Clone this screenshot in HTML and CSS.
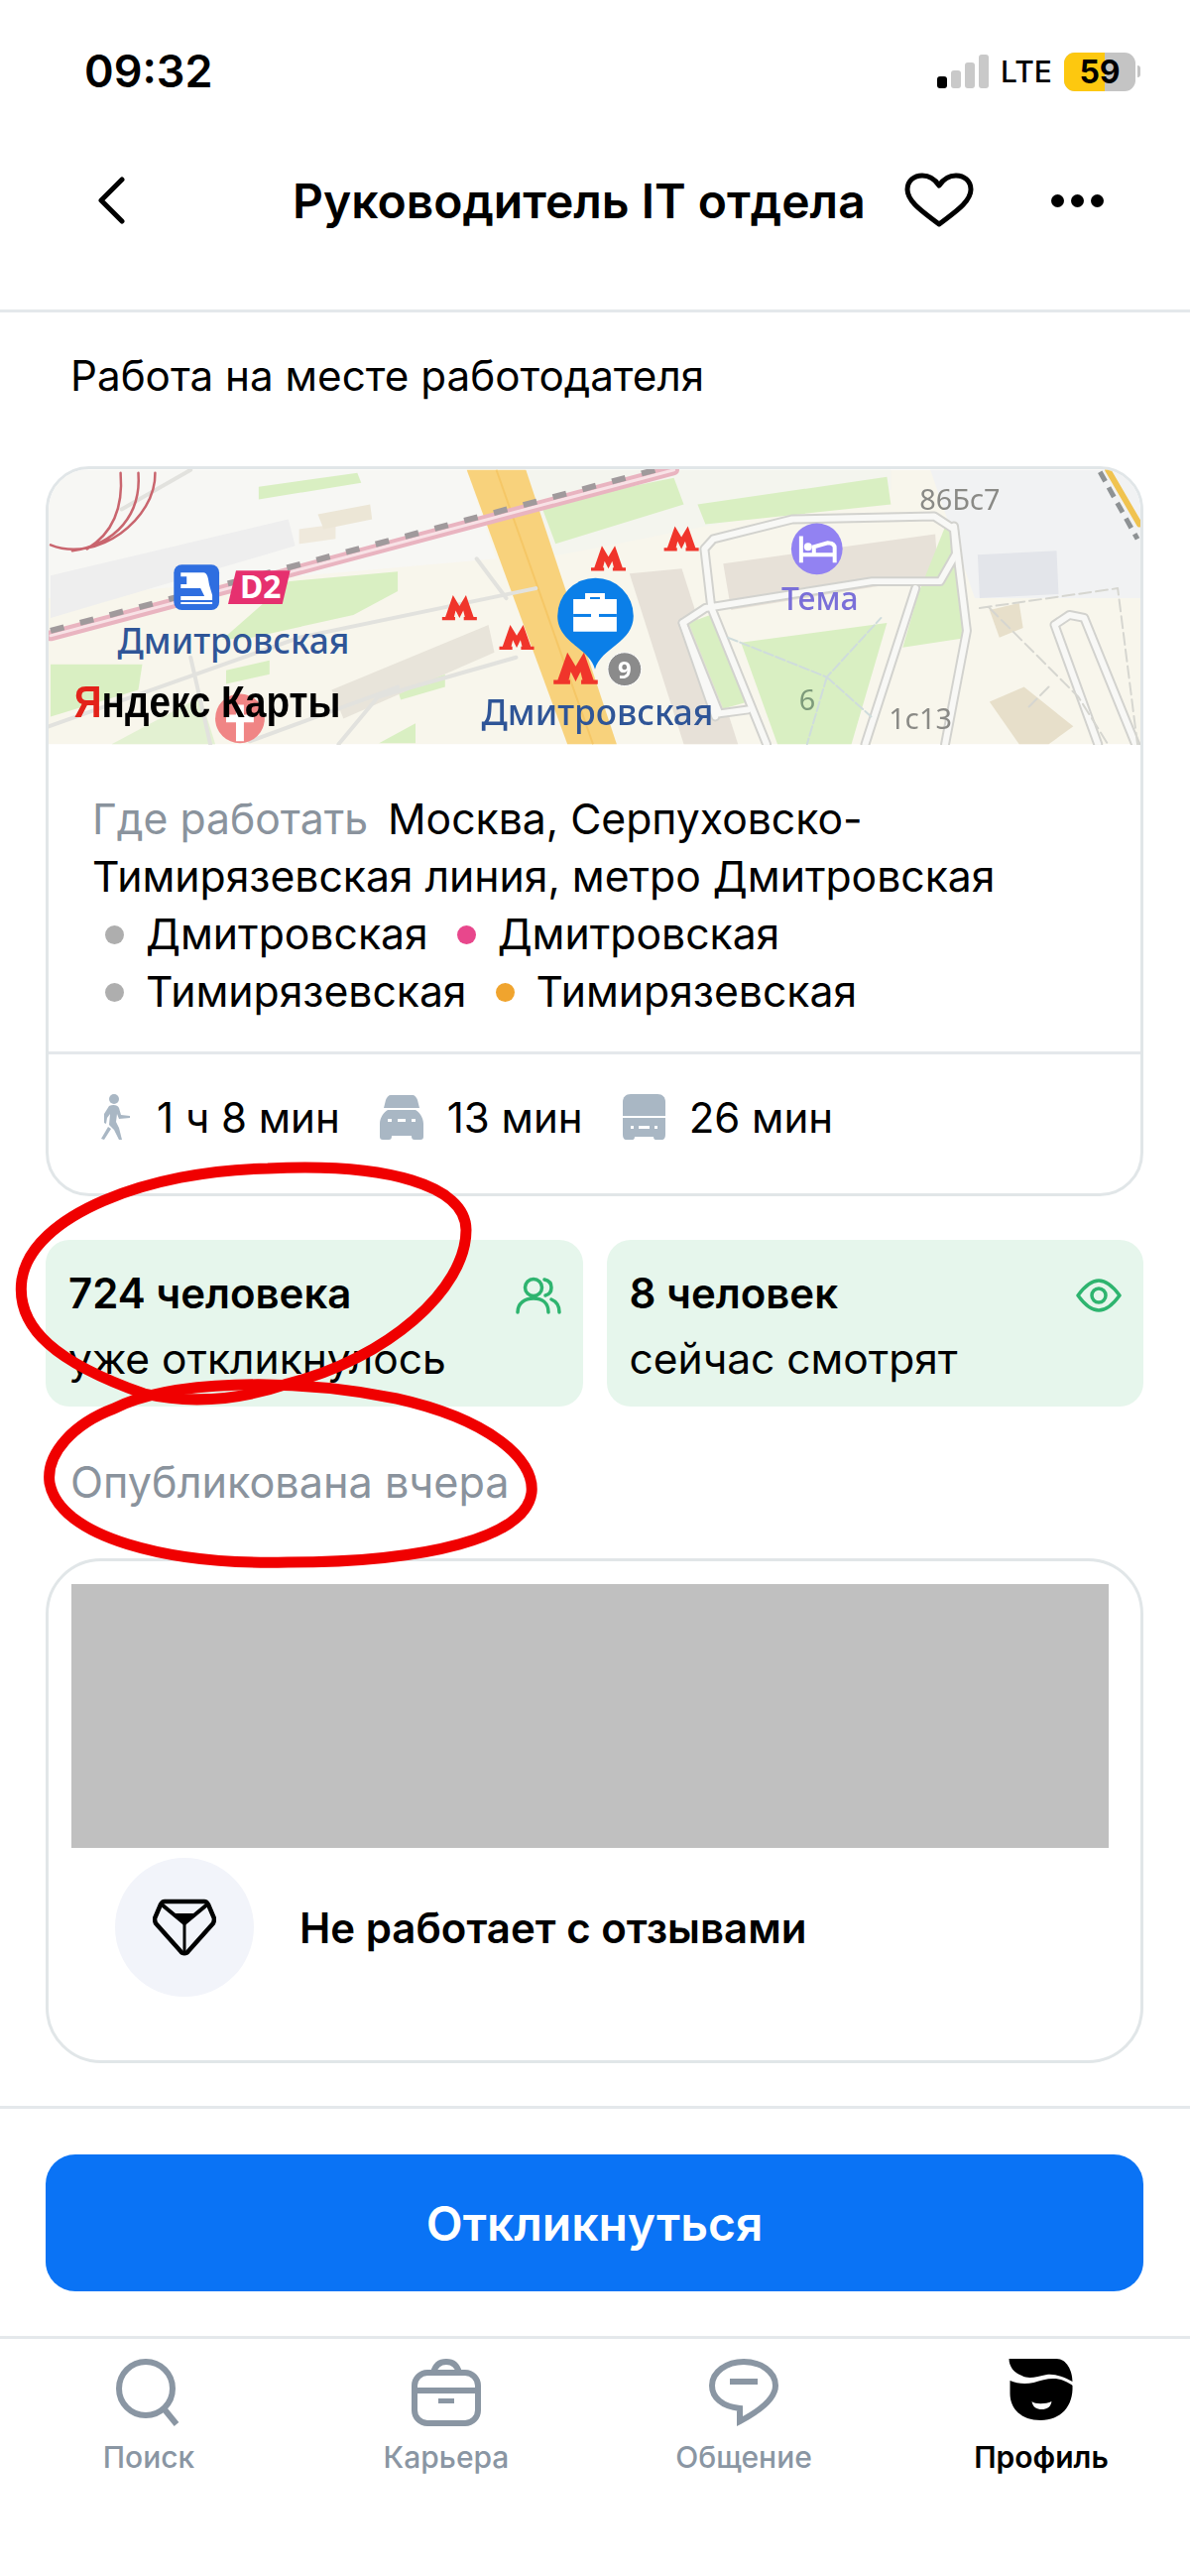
FILE: index.html
```html
<!DOCTYPE html>
<html lang="ru">
<head>
    <meta charset="UTF-8">
    <meta name="viewport" content="width=device-width, initial-scale=1.0">
    <title>Руководитель IT отдела</title>
    <link rel="stylesheet" href="styles.css">
</head>
<body>
<div class="page">
    <!-- Status bar -->
    <div class="statusbar">
        <span class="time">09:32</span>
        <div class="status-right">
            <div class="signal"><i class="on"></i><i></i><i></i><i></i></div>
            <span class="lte">LTE</span>
            <div class="battery"><span class="battery-fill"></span><span class="battery-num">59</span></div>
            <span class="battery-nub"></span>
        </div>
    </div>

    <!-- Top bar -->
    <div class="navbar">
        <svg class="nav-back" viewBox="0 0 30 48"><path d="M26 3 L5 24 L26 45" fill="none" stroke="#000" stroke-width="5" stroke-linecap="round" stroke-linejoin="round"/></svg>
        <h1 class="nav-title">Руководитель IT отдела</h1>
        <svg class="nav-heart" viewBox="0 0 72 56"><path d="M36 52 C22 41 4 30 4 17 C4 8 11 3 19 3 C26 3 32 7 36 13 C40 7 46 3 53 3 C61 3 68 8 68 17 C68 30 50 41 36 52 Z" fill="none" stroke="#000" stroke-width="5" stroke-linejoin="round"/></svg>
        <div class="nav-dots"><i></i><i></i><i></i></div>
    </div>

    <div class="content">
        <p class="work-type">Работа на месте работодателя</p>

        <!-- Map and address -->
        <div class="card">
            <svg class="map" viewBox="46 470 1107 278">
                <defs>
                    <g id="metro"><path d="M0 20 L3 20 L10 0 L16 10 L22 0 L29 20 L32 20 L32 23 L20 23 L20 20 L21 20 L19.500 14 L16 21 L12.500 14 L11 20 L12 20 L12 23 L0 23 Z" fill="#f0352b"/></g>
                </defs>
                <rect x="46" y="470" width="1107" height="278" fill="#f8f6ec"/>
                <path d="M46 470 L470 470 L500 560 L46 600 Z" fill="#f7f7f4"/>
                <path d="M48 577 L289 520 L296 547 L48 620 Z" fill="#eeeeee"/>
                <path d="M300 530 L337 525 L337 540 L300 545 Z" fill="#efe9dc"/>
                <path d="M319 515 L372 505 L374 520 L325 530 Z" fill="#ece6d6"/>
                <path d="M259 487 L359 473 L363 483 L259 500 Z" fill="#d9efc2"/>
                <path d="M222 642 L289 583 L400 573 L400 593 L355 617 L252 640 Z" fill="#d9efc2"/>
                <path d="M48 667 L141 667 L137 693 L48 720 Z" fill="#d9efc2"/>
                <path d="M226 673 L270 663 L270 677 L226 687 Z" fill="#d9efc2"/>
                <path d="M400 693 L448 677 L448 690 L403 703 Z" fill="#d9efc2"/>
                <path d="M381 747 L418 727 L418 747 Z" fill="#d9efc2"/>
                <path d="M110 748 L200 700 L215 748 Z" fill="#e3f1d2"/>
                <path d="M530 470 L900 470 L900 490 L545 560 Z" fill="#f4f5ee"/>
                <path d="M704 505 L896 477 L900 505 L712 525 Z" fill="#d9efc2"/>
                <path d="M545 505 L680 478 L690 505 L560 545 Z" fill="#d9efc2"/>
                <path d="M940 470 L1153 470 L1153 600 L985 600 Z" fill="#f1f2f3"/>
                <path d="M988 556 L1068 552 L1070 596 L990 600 Z" fill="#e3e5ea"/>
                <path d="M730 565 L945 535 L948 578 L738 612 Z" fill="#e7e1d8"/>
                <path d="M635 575 L688 570 L745 748 L690 748 Z" fill="#e7e1d8"/>
                <path d="M333 693 L492 627 L498 655 L345 722 Z" fill="#e8e4da"/>
                <path d="M748 645 L896 625 L860 748 L785 748 Z" fill="#d9efc2"/>
                <path d="M928 595 L958 520 L978 640 L912 650 Z" fill="#d9efc2"/>
                <path d="M695 625 L722 615 L755 705 L730 712 Z" fill="#d9efc2"/>
                <path d="M1000 612 L1030 605 L1034 630 L1010 640 Z" fill="#e7dfca"/>
                <path d="M1000 705 L1035 690 L1085 730 L1060 748 L1030 748 Z" fill="#e7dfca"/>
                <path d="M470 470 L530 470 L622 748 L572 748 Z" fill="#f8d27c"/>
                <path d="M500 470 L598 748" stroke="#f5c766" stroke-width="2" fill="none"/>

                <g fill="none" stroke-linecap="round" stroke-linejoin="round">
                    <path d="M722 720 L689 625 L712 610 L881 583 L950 583 L966 555 L964 530 L944 517 L800 520 L720 540 L711 550 L718 610 L774 748" stroke="#d2d2ce" stroke-width="10"/>
                    <path d="M755 713 L726 717 L689 625" stroke="#d2d2ce" stroke-width="10"/>
                    <path d="M964 527 L977 633 L955 748 M925 590 L874 748 M1066 627 L1110 748 M1066 627 L1081 617 L1096 620 L1148 748" stroke="#d2d2ce" stroke-width="10"/>
                    <path d="M722 720 L689 625 L712 610 L881 583 L950 583 L966 555 L964 530 L944 517 L800 520 L720 540 L711 550 L718 610 L774 748" stroke="#f8f8f6" stroke-width="6"/>
                    <path d="M755 713 L726 717 L689 625" stroke="#f8f8f6" stroke-width="6"/>
                    <path d="M964 527 L977 633 L955 748 M925 590 L874 748 M1066 627 L1110 748 M1066 627 L1081 617 L1096 620 L1148 748" stroke="#f8f8f6" stroke-width="6"/>
                    <path d="M46 730 L300 640 L540 590 M340 748 L380 700 L520 660 M210 748 L190 660 M120 510 L190 470 M480 560 L510 600 M250 745 L400 690" stroke="#e2e2de" stroke-width="4"/>
                    <path d="M735 640 L835 680 L890 620 M835 680 L815 748 M835 680 L880 720" stroke="#cfdcdc" stroke-width="2" stroke-dasharray="10 3"/>
                    <path d="M990 610 L1130 590 L1150 748 M1000 610 L1090 700 L1120 748 M1060 690 L1040 710" stroke="#d6d6d0" stroke-width="2" stroke-dasharray="12 5"/>
                    <path d="M48 638 L680 470" stroke="#e9b4c0" stroke-width="11"/>
                    <path d="M48 638 L680 470" stroke="#f8e2e6" stroke-width="3"/>
                    <path d="M48 633 L680 465" stroke="#a09a9c" stroke-width="6" stroke-dasharray="14 17" stroke-linecap="butt"/>
                    <path d="M1112 472 L1150 540" stroke="#8e9294" stroke-width="5" stroke-dasharray="11 7" stroke-linecap="butt"/>
                    <path d="M1120 470 L1152 525" stroke="#f0c350" stroke-width="6"/>
                    <path d="M119 473 C122 510 110 535 85 550 M137 473 C140 515 115 545 70 552 M154 473 C155 520 95 565 48 546" stroke="#c9656e" stroke-width="2.500"/>
                </g>

                <!-- hospital -->
                <circle cx="240" cy="722" r="25" fill="#f08585"/>
                <path d="M236 708 H244 V718 H254 V726 H244 V745 H236 V726 H226 V718 H236 Z" fill="#fff"/>

                <!-- train station -->
                <rect x="173" y="566" width="46" height="46" rx="8" fill="#2f6ee0"/>
                <path d="M180 574 H203 C207 574 208 580 209 587 L212 597 V602 H180 V598 H204 L200 590 H180 V586 H186 V578 H180 Z" fill="#fff"/>
                <rect x="180" y="604" width="32" height="2" fill="#fff"/>
                <path d="M236 572 H291 L283 606 H228 Z" fill="#e6306f"/>
                <text class="map-tag" x="240" y="600">D2</text>
                <text class="map-station" x="116" y="656">Дмитровская</text>

                <use href="#metro" transform="translate(445 597) scale(1.100)"/>
                <use href="#metro" transform="translate(503 627) scale(1.100)"/>
                <use href="#metro" transform="translate(596 547) scale(1.100)"/>
                <use href="#metro" transform="translate(670 527) scale(1.100)"/>
                <use href="#metro" transform="translate(558 655) scale(1.400)"/>

                <!-- vacancy pin -->
                <path d="M600 672 C594 650 562 645 562 618 A38.500 38.500 0 0 1 639 618 C639 645 606 650 600 672 Z" fill="#0b7fe8"/>
                <path d="M590 601 V595 H610 V601 H622 V634 H578 V601 Z M595 601 H605 V599 H595 Z" fill="#fff" fill-rule="evenodd"/>
                <rect x="578" y="616" width="44" height="3" fill="#0b7fe8"/>
                <rect x="596" y="613" width="8" height="8" fill="#fff"/>
                <circle cx="630" cy="672" r="17" fill="#8b8b8b" stroke="#fff" stroke-width="1"/>
                <text class="map-nine" x="630" y="681">9</text>

                <!-- hotel -->
                <circle cx="825" cy="550" r="26" fill="#9282f2"/>
                <path d="M809 537 V564 M809 556 H843 V564 M843 556 V549 C843 545 840 544 836 544 L822 548 V556" fill="none" stroke="#fff" stroke-width="4"/>
                <circle cx="816" cy="548" r="4" fill="#fff"/>

                <text class="map-station" x="485" y="729">Дмитровская</text>
                <text class="map-poi" x="789" y="612">Тема</text>
                <text class="map-house" x="929" y="510">86Бс7</text>
                <text class="map-house map-house-green" x="807" y="714">6</text>
                <text class="map-house" x="898" y="733">1с13</text>
                <text class="map-logo" x="72" y="721" textLength="270" lengthAdjust="spacingAndGlyphs"><tspan class="map-logo-y">Я</tspan>ндекс Карты</text>
            </svg>

            <div class="address">
                <div class="address-line"><span class="muted where">Где работать</span>Москва, Серпуховско-</div>
                <div class="address-line">Тимирязевская линия, метро Дмитровская</div>
                <div class="stations">
                    <span class="station"><i class="dot dot-gray"></i>Дмитровская</span>
                    <span class="station"><i class="dot dot-pink"></i>Дмитровская</span>
                </div>
                <div class="stations">
                    <span class="station"><i class="dot dot-gray"></i>Тимирязевская</span>
                    <span class="station"><i class="dot dot-orange"></i>Тимирязевская</span>
                </div>
            </div>

            <div class="commute">
                <span class="commute-item">
                    <svg class="commute-icon" viewBox="0 0 34 46" fill="#a9b7c4"><circle cx="15" cy="5" r="5"/><path d="M10 12 C14 10 19 11 20 14 L22 21 L31 22 L31 24 L20 25 L18 20 L17 28 L20 34 L23 46 L20 46 L15 36 L10 31 L11 20 L8 24 L7 30 L5 29 L5 20 Z"/><path d="M9 33 L12 35 L5 46 L2 45 Z"/></svg>
                    1 ч 8 мин
                </span>
                <span class="commute-item">
                    <svg class="commute-icon" viewBox="0 0 44 46" fill="#a9b7c4"><path d="M11 1 H33 C35 1 37 3 38 6 L40 14 H4 L6 6 C7 3 9 1 11 1 Z"/><path d="M8 16 H36 C40 18 44 24 44 30 V43 C44 45 43 46 41 46 H35 C33 46 32 45 32 42 H12 C12 45 11 46 9 46 H3 C1 46 0 45 0 43 V30 C0 24 4 18 8 16 Z"/><path d="M8 25 h4 v3 h-4 Z M18 25 h8 v3 h-8 Z M32 25 h4 v3 h-4 Z" fill="#fff"/></svg>
                    13 мин
                </span>
                <span class="commute-item">
                    <svg class="commute-icon" viewBox="0 0 43 46" fill="#a9b7c4"><path d="M8 0 H35 C40 0 43 3 43 8 V22 H0 V8 C0 3 3 0 8 0 Z"/><path d="M0 24 H43 V40 C43 44 42 46 39 46 H33 C32 46 31 45 31 43 H12 C12 45 11 46 10 46 H4 C1 46 0 44 0 40 Z"/><path d="M8 32 h3 v3 h-3 Z M16 32 h11 v3 h-11 Z M32 32 h3 v3 h-3 Z" fill="#fff"/></svg>
                    26 мин
                </span>
            </div>
        </div>

        <!-- Counters -->
        <div class="stats">
            <div class="stat">
                <div class="stat-text"><b>724 человека</b><span>уже откликнулось</span></div>
                <svg class="stat-icon" viewBox="0 0 46 38" fill="none" stroke="#2eb46f" stroke-width="3.500" stroke-linecap="round"><circle cx="18" cy="11" r="8.500"/><path d="M2 36 C2 27 9 22 18 22 C27 22 33 27 33 36"/><path d="M29 3 C34 4 36 7 36 11 C36 15 34 18 30 19"/><path d="M36 23 C41 25 44 30 44 36"/></svg>
            </div>
            <div class="stat">
                <div class="stat-text"><b>8 человек</b><span>сейчас смотрят</span></div>
                <svg class="stat-icon" viewBox="0 0 46 34" fill="none" stroke="#2eb46f" stroke-width="3.500"><path d="M2 17 C10 6 16 2 23 2 C30 2 36 6 44 17 C36 28 30 32 23 32 C16 32 10 28 2 17 Z" stroke-linejoin="round"/><circle cx="23" cy="17" r="7"/></svg>
            </div>
        </div>

        <p class="published">Опубликована вчера</p>

        <!-- Reviews -->
        <div class="card review-card">
            <div class="redacted"></div>
            <div class="review">
                <div class="review-badge">
                    <svg class="review-icon" viewBox="0 0 64 58" fill="none" stroke="#000" stroke-width="4.500" stroke-linejoin="round"><path d="M12 3 H52 C54 3 55 4 56 6 L62 20 C62 22 62 23 61 25 L36 53 C34 56 30 56 28 53 L3 25 C2 23 2 22 2 20 L8 6 C9 4 10 3 12 3 Z"/><path d="M9 6 L32 25 L55 6" stroke-width="4"/><path d="M32 24 V54" stroke-width="3"/><path d="M18 15 H46 L32 27 Z" fill="#000" stroke="none"/></svg>
                </div>
                <span class="review-text">Не работает с отзывами</span>
            </div>
        </div>
    </div>

    <!-- Apply -->
    <div class="apply">
        <button class="apply-btn">Откликнуться</button>
    </div>

    <!-- Bottom tabs -->
    <div class="tabbar">
        <div class="tab">
            <svg class="tab-icon" viewBox="0 0 70 68" fill="none" stroke="#8a96a3" stroke-width="6"><circle cx="32" cy="30" r="27"/><path d="M50 50 L63 66" stroke-linecap="butt"/></svg>
            <span>Поиск</span>
        </div>
        <div class="tab">
            <svg class="tab-icon" viewBox="0 0 70 68" fill="none" stroke="#8a96a3" stroke-width="6"><rect x="3" y="14" width="64" height="51" rx="13"/><path d="M3 32 H67"/><path d="M22 14 C24 6 29 3 35 3 C41 3 46 6 48 14"/><rect x="27" y="40" width="16" height="5" fill="#8a96a3" stroke="none"/></svg>
            <span>Карьера</span>
        </div>
        <div class="tab">
            <svg class="tab-icon" viewBox="0 0 70 68" fill="none" stroke="#8a96a3" stroke-width="6"><path d="M35 3 C52 3 67 13 67 27 C67 40 52 52 31 63 L31 50 C13 48 3 39 3 27 C3 13 18 3 35 3 Z" stroke-linejoin="miter"/><rect x="21" y="20" width="28" height="6" fill="#8a96a3" stroke="none"/></svg>
            <span>Общение</span>
        </div>
        <div class="tab tab-active">
            <svg class="tab-icon" viewBox="-2.500 0 70 68" fill="#000"><path d="M0 0 H48 C58 0 64 12 64 23 C55 18 46 15 38 16 C28 18 20 21 13 17 C5 14 0 8 0 0 Z"/><path d="M1 22 C8 25 16 26 25 24 C35 21 45 18 55 22 C60 24 63 26 64 27 C65 48 52 62 32 62 C12 62 1 50 1 35 Z"/><path d="M23 43 C26 46 37 46 43 43 C42 49 38 51 33 51 C28 51 24 49 23 43 Z" fill="#fff"/></svg>
            <span>Профиль</span>
        </div>
    </div>

    <!-- Red marker drawn over the screenshot -->
    <svg class="marker" viewBox="0 0 1200 2597" fill="none" stroke="#f00000" stroke-width="11">
        <path d="M145 1405 C60 1375 15 1340 22 1290 C32 1225 150 1180 270 1178 C390 1172 470 1195 470 1240 C470 1300 390 1370 290 1395 C240 1412 190 1415 145 1405 Z"/>
        <path d="M115 1420 C170 1392 290 1388 400 1410 C490 1430 540 1470 536 1505 C530 1550 430 1575 290 1575 C170 1578 60 1550 50 1495 C46 1465 75 1435 115 1420 Z"/>
    </svg>
</div>
</body>
</html>
```

FILE: styles.css
```css
* {
    box-sizing: border-box;
}
body {
    margin: 0;
    background: #fff;
    color: #000;
    font-family: Inter, "Liberation Sans", sans-serif;
}
p, h1 {
    margin: 0;
}
.page {
    position: relative;
    width: 1200px;
    height: 2597px;
    overflow: hidden;
}

/* status bar */
.statusbar {
    height: 144px;
    padding: 46px 50px 0 85px;
    display: flex;
    justify-content: space-between;
    align-items: flex-start;
}
.time {
    font-size: 45px;
    line-height: 52px;
    font-weight: 600;
}
.status-right {
    display: flex;
    align-items: center;
    height: 52px;
}
.signal {
    display: flex;
    align-items: flex-end;
    gap: 4px;
    height: 34px;
    margin-right: 12px;
}
.signal i {
    width: 10px;
    background: #c9c9c9;
    border-radius: 3px;
    height: 34px;
}
.signal i:nth-child(1) {
    height: 12px;
    background: #000;
}
.signal i:nth-child(2) {
    height: 18px;
}
.signal i:nth-child(3) {
    height: 26px;
}
.lte {
    font-size: 30px;
    font-weight: 500;
    margin-right: 10px;
    width: 54px;
}
.battery {
    position: relative;
    width: 72px;
    height: 39px;
    border-radius: 11px;
    background: #c4c4c4;
    overflow: hidden;
    text-align: center;
}
.battery-fill {
    position: absolute;
    left: 0;
    top: 0;
    bottom: 0;
    width: 41px;
    background: #fdc80f;
}
.battery-num {
    position: relative;
    font-size: 32px;
    line-height: 39px;
    font-weight: 700;
}
.battery-nub {
    width: 3px;
    height: 12px;
    margin-left: 2px;
    background: #c4c4c4;
    border-radius: 0 3px 3px 0;
}

/* top bar */
.navbar {
    position: relative;
    height: 171px;
    border-bottom: 3px solid #e4e8eb;
    padding-bottom: 52px;
    display: flex;
    align-items: center;
}
.nav-back {
    width: 30px;
    height: 48px;
    margin-left: 97px;
}
.nav-title {
    margin-left: 168px;
    font-size: 48px;
    font-weight: 600;
    white-space: nowrap;
}
.nav-heart {
    width: 72px;
    height: 56px;
    margin-left: 38px;
}
.nav-dots {
    display: flex;
    gap: 7px;
    margin-left: 77px;
}
.nav-dots i {
    width: 13px;
    height: 13px;
    border-radius: 50%;
    background: #000;
}

/* content */
.content {
    padding: 0 47px 0 46px;
}
.work-type {
    font-size: 42.200px;
    line-height: 52px;
    margin: 38px 0 0 25px;
}
.card {
    margin-top: 65px;
    border: 3px solid #e1e6e8;
    border-radius: 44px;
    overflow: hidden;
}
.map {
    display: block;
    width: 100%;
    height: 278px;
    filter: blur(0.6px);
}
.map text {
    font-family: "Noto Sans", "Liberation Sans", sans-serif;
}
.map-tag {
    font-size: 32px;
    font-weight: 700;
    fill: #fff;
}
.map-station {
    font-size: 35.500px;
    font-weight: 500;
    fill: #2f5597;
}
.map-nine {
    font-size: 24px;
    font-weight: 700;
    fill: #fff;
    text-anchor: middle;
}
.map-poi {
    font-size: 32px;
    font-weight: 500;
    fill: #7a6fd8;
}
.map-house {
    font-size: 29px;
    fill: #8a8a86;
}
.map-house-green {
    fill: #7d9a7b;
}
.map .map-logo {
    font-family: "Liberation Sans", sans-serif;
    font-size: 44px;
    font-weight: 700;
    fill: #000;
}
.map-logo-y {
    fill: #e3231a;
}
.address {
    padding: 46px 24px 0 44px;
    height: 312px;
    border-bottom: 3px solid #e4e8eb;
    font-size: 42.700px;
    line-height: 58px;
}
.muted {
    color: #8a939d;
}
.where {
    margin-right: 20px;
}
.stations {
    display: flex;
    gap: 29px;
    padding-left: 13px;
}
.station {
    display: flex;
    align-items: center;
}
.dot {
    width: 19px;
    height: 19px;
    border-radius: 50%;
    margin-right: 22px;
}
.dot-gray {
    background: #aeaeae;
}
.dot-pink {
    background: #e8478c;
}
.dot-orange {
    background: #f0a42e;
}
.commute {
    height: 140px;
    padding: 0 24px 14px 51px;
    display: flex;
    align-items: center;
    gap: 40px;
    font-size: 42px;
}
.commute-item {
    display: flex;
    align-items: center;
    gap: 24px;
}
.commute-icon {
    height: 46px;
    width: auto;
}

/* counters */
.stats {
    display: flex;
    gap: 24px;
    margin-top: 44px;
}
.stat {
    flex: 1;
    height: 168px;
    background: #e6f6ec;
    border-radius: 24px;
    padding: 21px 22px 21px 23px;
    display: flex;
    justify-content: space-between;
}
.stat-text {
    display: flex;
    flex-direction: column;
    font-size: 42.500px;
    line-height: 66px;
    white-space: nowrap;
}
.stat-text b {
    font-size: 42px;
    font-weight: 600;
}
.stat-icon {
    width: 46px;
    height: 40px;
    margin-top: 15px;
}
.published {
    color: #8a939d;
    font-size: 43.200px;
    line-height: 52px;
    margin: 50px 0 0 25px;
}

/* reviews */
.review-card {
    margin-top: 51px;
    height: 509px;
    border-radius: 56px;
    padding: 23px 32px 23px 23px;
}
.redacted {
    height: 266px;
    background: #c0c0c0;
}
.review {
    display: flex;
    align-items: center;
    padding: 10px 0 0 44px;
}
.review-badge {
    width: 140px;
    height: 140px;
    border-radius: 50%;
    background: #f2f4fa;
    display: flex;
    align-items: center;
    justify-content: center;
}
.review-icon {
    width: 64px;
    height: 58px;
}
.review-text {
    margin-left: 46px;
    font-size: 42px;
    font-weight: 600;
}

/* apply */
.apply {
    position: absolute;
    left: 0;
    right: 0;
    top: 2123px;
    height: 235px;
    padding: 46px 47px 0 46px;
    border-top: 3px solid #e4e8eb;
    border-bottom: 3px solid #e4e8eb;
}
.apply-btn {
    display: block;
    width: 100%;
    height: 138px;
    border: none;
    border-radius: 30px;
    background: #0a73f5;
    color: #fff;
    font-family: inherit;
    font-size: 48px;
    font-weight: 600;
}

/* tabs */
.tabbar {
    position: absolute;
    left: 0;
    right: 0;
    top: 2378px;
    display: grid;
    grid-template-columns: repeat(4, 1fr);
}
.tab {
    display: flex;
    flex-direction: column;
    align-items: center;
    gap: 12px;
    font-size: 30px;
    line-height: 38px;
    font-weight: 500;
    color: #8a96a3;
}
.tab-icon {
    width: 70px;
    height: 68px;
}
.tab-active {
    color: #000;
    font-weight: 600;
}

.marker {
    position: absolute;
    left: 0;
    top: 0;
    width: 1200px;
    height: 2597px;
    pointer-events: none;
}
```
